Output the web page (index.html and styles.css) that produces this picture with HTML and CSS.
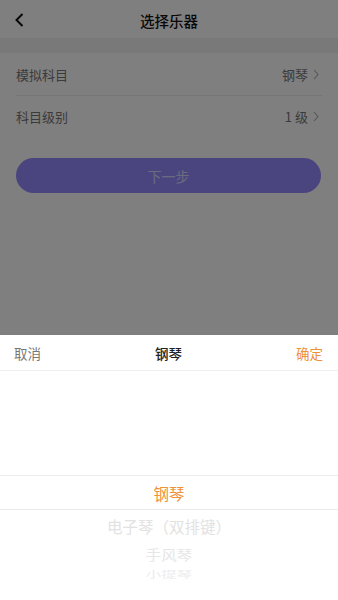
FILE: index.html
```html
<!DOCTYPE html>
<html lang="zh">
<head>
<meta charset="utf-8">
<link rel="stylesheet" href="styles.css">
</head>
<body>
<div class="page">
  <div class="nav">
    <svg class="back" width="12" height="16" viewBox="0 0 12 16"><path d="M8.5 2 L2.5 8 L8.5 14" fill="none" stroke="#111" stroke-width="2"/></svg>
    <div class="title">选择乐器</div>
  </div>
  <div class="band"></div>
  <div class="list">
    <div class="row">
      <span class="label">模拟科目</span>
      <span class="value">钢琴<svg class="chev" width="6" height="11" viewBox="0 0 6 11"><path d="M1 1 L5 5.5 L1 10" fill="none" stroke="#aaa" stroke-width="1.1"/></svg></span>
    </div>
    <div class="row">
      <span class="label">科目级别</span>
      <span class="value">1 级<svg class="chev" width="6" height="11" viewBox="0 0 6 11"><path d="M1 1 L5 5.5 L1 10" fill="none" stroke="#aaa" stroke-width="1.1"/></svg></span>
    </div>
  </div>
  <div class="btnwrap"><div class="btn">下一步</div></div>
</div>
<div class="mask"></div>
<div class="sheet">
  <div class="sheet-head">
    <span class="cancel">取消</span>
    <span class="sheet-title">钢琴</span>
    <span class="ok">确定</span>
  </div>
  <div class="picker">
    <div class="blank"></div>
    <div class="sel">钢琴</div>
    <div class="opt o1">电子琴（双排键）</div>
    <div class="opt o2">手风琴</div>
    <div class="opt o3">小提琴</div>
  </div>
</div>
</body>
</html>
```
FILE: styles.css
```css
* { box-sizing: border-box; }
html, body { margin: 0; padding: 0; }
body {
  width: 338px;
  height: 600px;
  overflow: hidden;
  position: relative;
  background: #fff;
  font-family: "Noto Sans CJK SC", "Noto Sans", sans-serif;
  color: #333;
}
.page { width: 338px; }
.nav {
  height: 38px;
  padding-top: 3px;
  display: flex;
  align-items: center;
  justify-content: center;
  position: relative;
  background: #fff;
}
.back { position: absolute; left: 14px; top: 12px; }
.title { font-size: 14.5px; color: #111; font-weight: 500; }
.band { height: 15px; background: #f3f3f3; }
.list { padding: 0 16px; }
.row {
  height: 42px;
  display: flex;
  align-items: center;
  justify-content: space-between;
  font-size: 13px;
  color: #777;
}
.row + .row { border-top: 1px solid #eaeaea; height: 41px; }
.value { display: flex; align-items: center; gap: 5px; padding-right: 3px; }
.chev { margin-top: 1px; }
.btnwrap { padding: 22px 17px 0 16px; }
.btn {
  height: 35px;
  border-radius: 18px;
  background: #948bff;
  color: rgba(240, 238, 255, 0.75);
  display: flex;
  align-items: center;
  justify-content: center;
  font-size: 14px;
}
.mask {
  position: absolute;
  left: 0; top: 0;
  width: 338px; height: 600px;
  background: rgba(0, 0, 0, 0.5);
}
.sheet {
  position: absolute;
  left: 0; top: 335px;
  width: 338px; height: 265px;
  background: #fff;
}
.sheet-head {
  height: 36px;
  display: flex;
  align-items: center;
  justify-content: space-between;
  padding: 0 15px 0 14px;
  border-bottom: 1px solid #efefef;
  font-size: 13.5px;
}
.cancel { color: #777; }
.sheet-title { color: #222; font-weight: 500; }
.ok { color: #f0913a; }
.picker { display: flex; flex-direction: column; align-items: center; }
.blank { height: 104px; }
.sel {
  width: 338px;
  height: 35px;
  border-top: 1px solid #ececec;
  border-bottom: 1px solid #ececec;
  display: flex;
  align-items: center;
  justify-content: center;
  color: #f0913a;
  font-size: 15.5px;
}
.opt { color: #e2e2e2; font-size: 15.5px; line-height: 1; }
.o1 { margin-top: 9px; }
.o2 { margin-top: 12px; transform: scaleY(0.85); color: #e6e6e6; }
.o3 { margin-top: 5px; transform: scaleY(0.6); color: #ececec; }
```
